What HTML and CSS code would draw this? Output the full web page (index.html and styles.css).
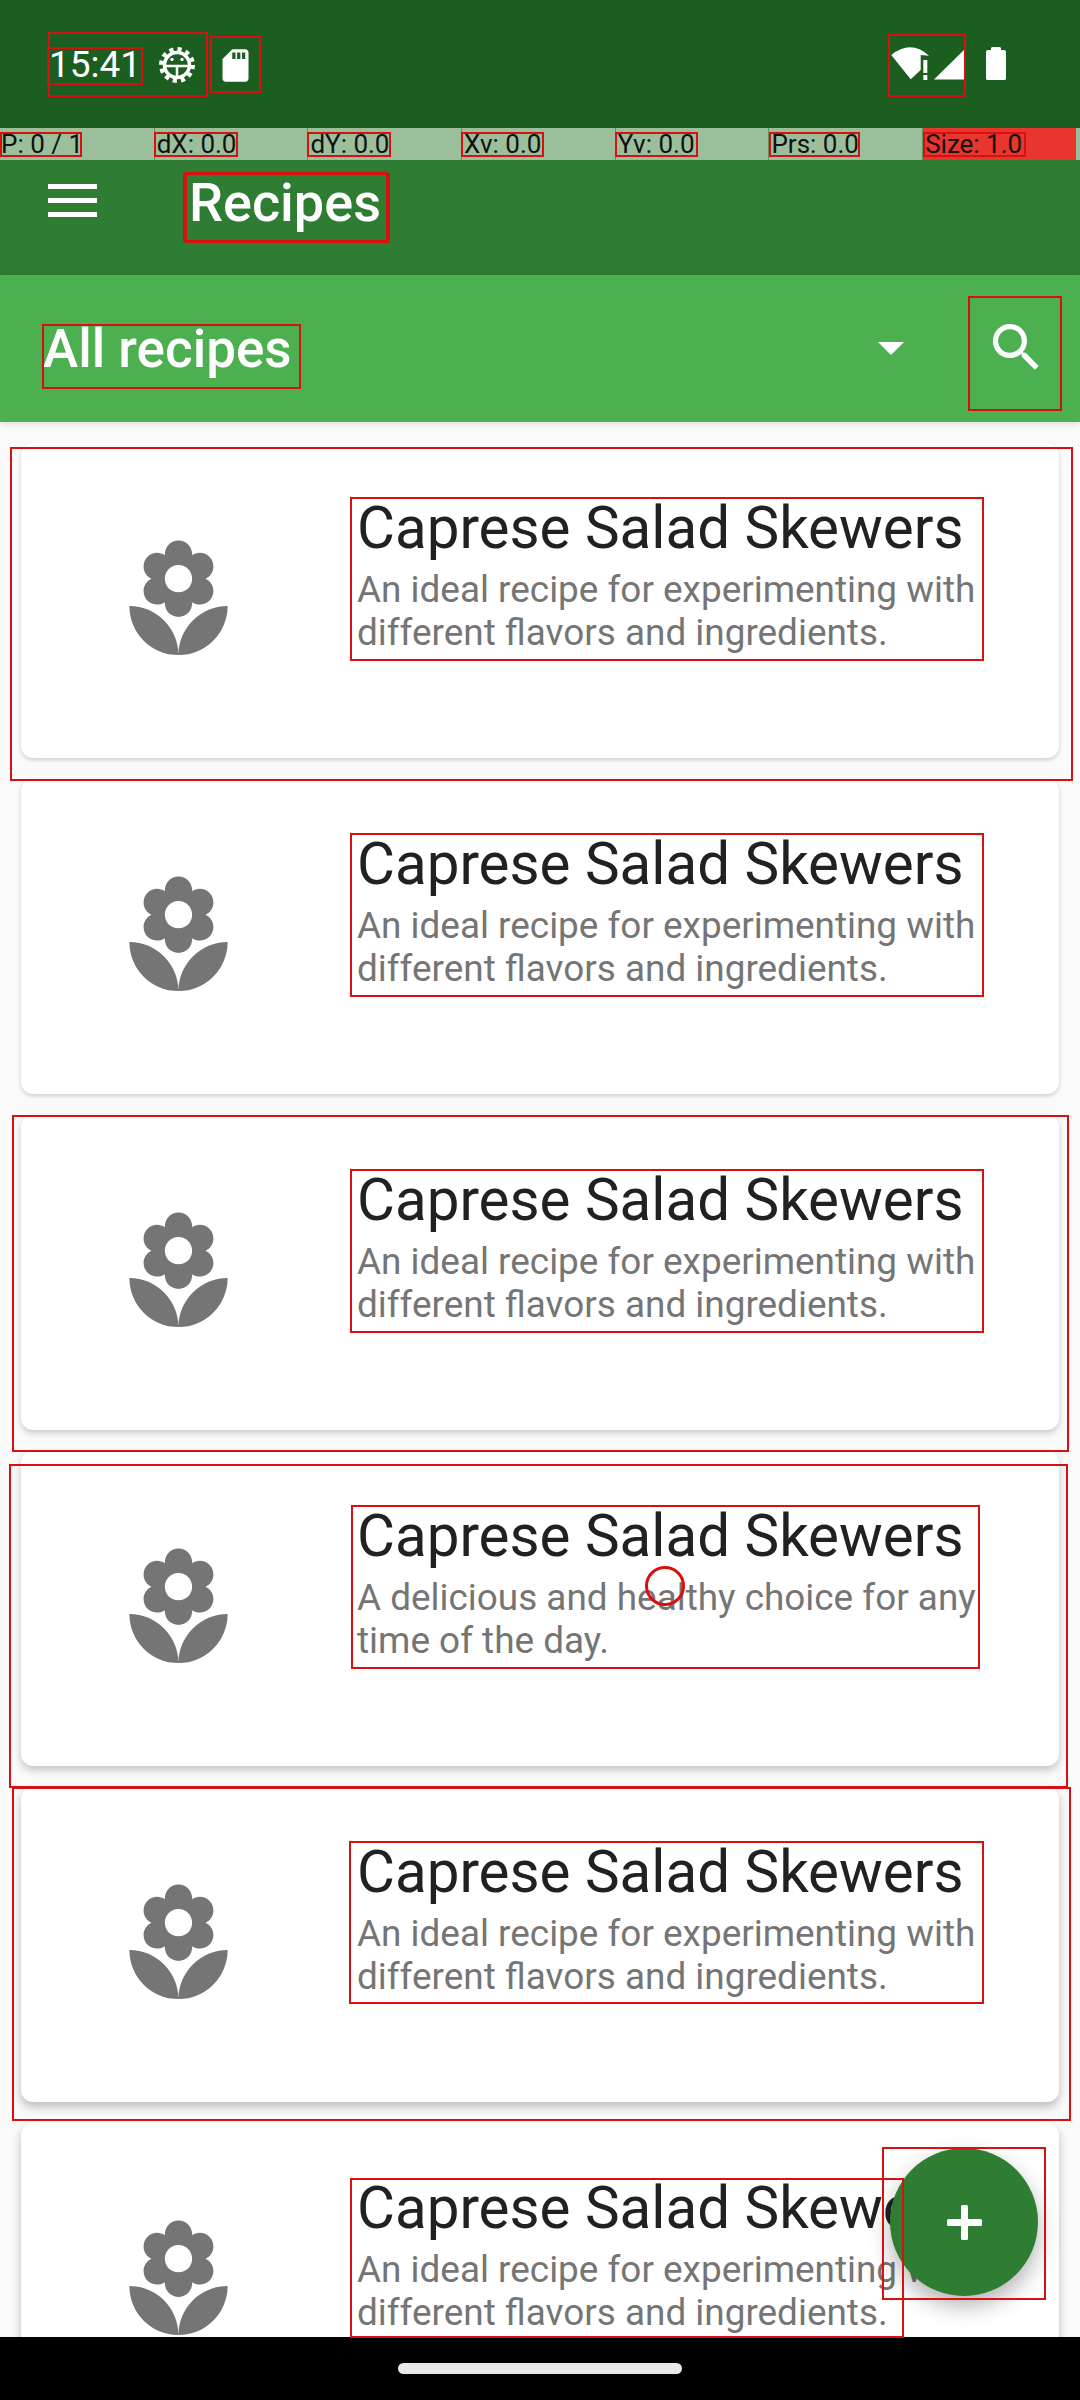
FILE: index.html
```html
<!DOCTYPE html>
<html>
<head>
	<meta charset="UTF-8">
	<title>Recipes</title>
	<link rel="stylesheet" href="styles.css">
</head>
<body>
<div class="screen">
	<div class="status-bar">
		<span class="clock">15:41</span>
		<svg class="gear" viewBox="0 0 36 36">
			<circle class="gear-teeth" cx="18" cy="18" r="15.5"/>
			<circle class="gear-ring" cx="18" cy="18" r="12.5"/>
			<path class="gear-lines" d="M6 19h24M18 19v11"/>
			<circle class="gear-eye" cx="13" cy="12.5" r="1.7"/>
			<circle class="gear-eye" cx="23" cy="12.5" r="1.7"/>
		</svg>
		<svg class="sd" viewBox="0 0 24 24"><path d="M18 2h-8L4.02 8 4 20c0 1.1.9 2 2 2h12c1.1 0 2-.9 2-2V4c0-1.1-.9-2-2-2zm-6 6h-2V4h2v4zm3 0h-2V4h2v4zm3 0h-2V4h2v4z"/></svg>
		<div class="status-right">
			<svg class="signal" viewBox="0 0 80 36">
				<path d="M4.300 11Q23.700-4.750 42 11.700L33.700 11V26L23.700 35.300Z"/>
				<path d="M36.300 16h4v13h-4zM36.300 31h4v5h-4z"/>
				<path d="M47 35.500L79 4V35.500Z"/>
			</svg>
			<svg class="battery" viewBox="0 0 20 33"><path d="M5 3V1.500C5 .7 5.700 0 6.500 0h7C14.300 0 15 .7 15 1.500V3h3c1.100 0 2 .9 2 2v26.500c0 .8-.7 1.500-1.500 1.500h-17C.7 33 0 32.300 0 31.500V5c0-1.100.9-2 2-2z"/></svg>
		</div>
	</div>

	<div class="debug-bar">
		<div class="debug-cell">P: 0 / 1</div>
		<div class="debug-cell">dX: 0.0</div>
		<div class="debug-cell">dY: 0.0</div>
		<div class="debug-cell">Xv: 0.0</div>
		<div class="debug-cell">Yv: 0.0</div>
		<div class="debug-cell">Prs: 0.0</div>
		<div class="debug-cell debug-red">Size: 1.0</div>
	</div>

	<div class="toolbar">
		<div class="menu-icon"><span></span><span></span><span></span></div>
		<div class="toolbar-title">Recipes</div>
	</div>

	<div class="filter-bar">
		<div class="filter-label">All recipes</div>
		<div class="caret"></div>
		<svg class="search" viewBox="0 0 24 24"><path d="M15.500 14h-.79l-.28-.27C15.410 12.590 16 11.110 16 9.500 16 5.910 13.090 3 9.500 3S3 5.910 3 9.500 5.910 16 9.500 16c1.610 0 3.090-.59 4.230-1.570l.27.28v.79l5 4.990L20.490 19l-4.990-5zm-6 0C7.010 14 5 11.990 5 9.500S7.010 5 9.500 5 14 7.010 14 9.500 11.990 14 9.500 14z"/></svg>
	</div>

	<div class="list">
		<div class="card">
			<svg class="flower" viewBox="0 0 24 24"><path d="M12 22c4.970 0 9-4.030 9-9-4.970 0-9 4.030-9 9zM5.600 10.250c0 1.380 1.120 2.500 2.500 2.500.53 0 1.010-.16 1.420-.44l-.02.19c0 1.380 1.120 2.500 2.500 2.500s2.500-1.120 2.500-2.500l-.02-.19c.4.28.89.44 1.420.44 1.380 0 2.500-1.120 2.500-2.500 0-1-.59-1.850-1.430-2.250.84-.4 1.430-1.250 1.430-2.250 0-1.380-1.120-2.500-2.500-2.500-.53 0-1.010.16-1.420.44l.02-.19C14.500 2.120 13.380 1 12 1S9.500 2.120 9.500 3.500l.02.19c-.4-.28-.89-.44-1.420-.44-1.380 0-2.500 1.120-2.500 2.500 0 1 .59 1.850 1.430 2.250-.84.4-1.430 1.250-1.430 2.250zM12 5.500c1.380 0 2.500 1.120 2.500 2.500s-1.120 2.500-2.500 2.500S9.500 9.380 9.500 8s1.120-2.500 2.500-2.500zM3 13c0 4.970 4.030 9 9 9 0-4.970-4.030-9-9-9z"/></svg>
			<div class="card-text">
				<div class="card-title">Caprese Salad Skewers</div>
				<div class="card-desc">An ideal recipe for experimenting with different flavors and ingredients.</div>
			</div>
		</div>
		<div class="card">
			<svg class="flower" viewBox="0 0 24 24"><path d="M12 22c4.970 0 9-4.030 9-9-4.970 0-9 4.030-9 9zM5.600 10.250c0 1.380 1.120 2.500 2.500 2.500.53 0 1.010-.16 1.420-.44l-.02.19c0 1.380 1.120 2.500 2.500 2.500s2.500-1.120 2.500-2.500l-.02-.19c.4.28.89.44 1.420.44 1.380 0 2.500-1.120 2.500-2.500 0-1-.59-1.850-1.430-2.250.84-.4 1.430-1.250 1.430-2.250 0-1.380-1.120-2.500-2.500-2.500-.53 0-1.010.16-1.420.44l.02-.19C14.500 2.120 13.380 1 12 1S9.500 2.120 9.500 3.500l.02.19c-.4-.28-.89-.44-1.420-.44-1.380 0-2.500 1.120-2.500 2.500 0 1 .59 1.850 1.430 2.250-.84.4-1.430 1.250-1.430 2.250zM12 5.500c1.380 0 2.500 1.120 2.500 2.500s-1.120 2.500-2.500 2.500S9.500 9.380 9.500 8s1.120-2.500 2.500-2.500zM3 13c0 4.970 4.030 9 9 9 0-4.970-4.030-9-9-9z"/></svg>
			<div class="card-text">
				<div class="card-title">Caprese Salad Skewers</div>
				<div class="card-desc">An ideal recipe for experimenting with different flavors and ingredients.</div>
			</div>
		</div>
		<div class="card">
			<svg class="flower" viewBox="0 0 24 24"><path d="M12 22c4.970 0 9-4.030 9-9-4.970 0-9 4.030-9 9zM5.600 10.250c0 1.380 1.120 2.500 2.500 2.500.53 0 1.010-.16 1.420-.44l-.02.19c0 1.380 1.120 2.500 2.500 2.500s2.500-1.120 2.500-2.500l-.02-.19c.4.28.89.44 1.420.44 1.380 0 2.500-1.120 2.500-2.500 0-1-.59-1.850-1.430-2.250.84-.4 1.430-1.250 1.430-2.250 0-1.380-1.120-2.500-2.500-2.500-.53 0-1.010.16-1.420.44l.02-.19C14.500 2.120 13.380 1 12 1S9.500 2.120 9.500 3.500l.02.19c-.4-.28-.89-.44-1.420-.44-1.380 0-2.500 1.120-2.500 2.500 0 1 .59 1.850 1.430 2.250-.84.4-1.430 1.250-1.430 2.250zM12 5.500c1.380 0 2.500 1.120 2.500 2.500s-1.120 2.500-2.500 2.500S9.500 9.380 9.500 8s1.120-2.500 2.500-2.500zM3 13c0 4.970 4.030 9 9 9 0-4.970-4.030-9-9-9z"/></svg>
			<div class="card-text">
				<div class="card-title">Caprese Salad Skewers</div>
				<div class="card-desc">An ideal recipe for experimenting with different flavors and ingredients.</div>
			</div>
		</div>
		<div class="card">
			<svg class="flower" viewBox="0 0 24 24"><path d="M12 22c4.970 0 9-4.030 9-9-4.970 0-9 4.030-9 9zM5.600 10.250c0 1.380 1.120 2.500 2.500 2.500.53 0 1.010-.16 1.420-.44l-.02.19c0 1.380 1.120 2.500 2.500 2.500s2.500-1.120 2.500-2.500l-.02-.19c.4.28.89.44 1.420.44 1.380 0 2.500-1.120 2.500-2.500 0-1-.59-1.850-1.430-2.250.84-.4 1.430-1.250 1.430-2.250 0-1.380-1.120-2.500-2.500-2.500-.53 0-1.010.16-1.420.44l.02-.19C14.500 2.120 13.380 1 12 1S9.500 2.120 9.500 3.500l.02.19c-.4-.28-.89-.44-1.420-.44-1.380 0-2.500 1.120-2.500 2.500 0 1 .59 1.850 1.430 2.250-.84.4-1.430 1.250-1.430 2.250zM12 5.500c1.380 0 2.500 1.120 2.500 2.500s-1.120 2.500-2.500 2.500S9.500 9.380 9.500 8s1.120-2.500 2.500-2.500zM3 13c0 4.970 4.030 9 9 9 0-4.970-4.030-9-9-9z"/></svg>
			<div class="card-text">
				<div class="card-title">Caprese Salad Skewers</div>
				<div class="card-desc">A delicious and healthy choice for any time of the day.</div>
			</div>
		</div>
		<div class="card">
			<svg class="flower" viewBox="0 0 24 24"><path d="M12 22c4.970 0 9-4.030 9-9-4.970 0-9 4.030-9 9zM5.600 10.250c0 1.380 1.120 2.500 2.500 2.500.53 0 1.010-.16 1.420-.44l-.02.19c0 1.380 1.120 2.500 2.500 2.500s2.500-1.120 2.500-2.500l-.02-.19c.4.28.89.44 1.420.44 1.380 0 2.500-1.120 2.500-2.500 0-1-.59-1.850-1.430-2.250.84-.4 1.430-1.250 1.430-2.250 0-1.380-1.120-2.500-2.500-2.500-.53 0-1.010.16-1.420.44l.02-.19C14.500 2.120 13.380 1 12 1S9.500 2.120 9.500 3.500l.02.19c-.4-.28-.89-.44-1.420-.44-1.380 0-2.500 1.120-2.500 2.500 0 1 .59 1.850 1.430 2.250-.84.4-1.430 1.250-1.430 2.250zM12 5.500c1.380 0 2.500 1.120 2.500 2.500s-1.120 2.500-2.500 2.500S9.500 9.380 9.500 8s1.120-2.500 2.500-2.500zM3 13c0 4.970 4.030 9 9 9 0-4.970-4.030-9-9-9z"/></svg>
			<div class="card-text">
				<div class="card-title">Caprese Salad Skewers</div>
				<div class="card-desc">An ideal recipe for experimenting with different flavors and ingredients.</div>
			</div>
		</div>
		<div class="card">
			<svg class="flower" viewBox="0 0 24 24"><path d="M12 22c4.970 0 9-4.030 9-9-4.970 0-9 4.030-9 9zM5.600 10.250c0 1.380 1.120 2.500 2.500 2.500.53 0 1.010-.16 1.420-.44l-.02.19c0 1.380 1.120 2.500 2.500 2.500s2.500-1.120 2.500-2.500l-.02-.19c.4.28.89.44 1.420.44 1.380 0 2.500-1.120 2.500-2.500 0-1-.59-1.850-1.430-2.250.84-.4 1.430-1.250 1.430-2.250 0-1.380-1.120-2.500-2.500-2.500-.53 0-1.010.16-1.420.44l.02-.19C14.500 2.120 13.380 1 12 1S9.500 2.120 9.500 3.500l.02.19c-.4-.28-.89-.44-1.420-.44-1.380 0-2.500 1.120-2.500 2.500 0 1 .59 1.850 1.430 2.250-.84.4-1.430 1.250-1.430 2.250zM12 5.500c1.380 0 2.500 1.120 2.500 2.500s-1.120 2.500-2.500 2.500S9.500 9.380 9.500 8s1.120-2.500 2.500-2.500zM3 13c0 4.970 4.030 9 9 9 0-4.970-4.030-9-9-9z"/></svg>
			<div class="card-text">
				<div class="card-title">Caprese Salad Skewers</div>
				<div class="card-desc">An ideal recipe for experimenting with different flavors and ingredients.</div>
			</div>
		</div>
	</div>

	<div class="nav-bar"><div class="nav-pill"></div></div>

	<div class="fab">
		<svg class="fab-plus" viewBox="0 0 35 35">
			<rect x="14" y="0" width="7" height="35" rx="1.500"/>
			<rect x="0" y="14" width="35" height="7" rx="1.500"/>
		</svg>
	</div>

	<!-- red outlines drawn over the screenshot -->
	<div class="mark m-group"></div>
	<div class="mark m-clock"></div>
	<div class="mark m-sd"></div>
	<div class="mark m-wifi"></div>
	<div class="mark m-p"></div>
	<div class="mark m-dx"></div>
	<div class="mark m-dy"></div>
	<div class="mark m-xv"></div>
	<div class="mark m-yv"></div>
	<div class="mark m-prs"></div>
	<div class="mark m-size"></div>
	<div class="mark m-title"></div>
	<div class="mark m-title2"></div>
	<div class="mark m-filter"></div>
	<div class="mark m-search"></div>
	<div class="mark m-card1"></div>
	<div class="mark m-text1"></div>
	<div class="mark m-text2"></div>
	<div class="mark m-card3"></div>
	<div class="mark m-text3"></div>
	<div class="mark m-card4"></div>
	<div class="mark m-text4"></div>
	<div class="mark m-card5"></div>
	<div class="mark m-text5"></div>
	<div class="mark m-text6"></div>
	<div class="mark m-fab"></div>
	<div class="mark m-touch"></div>
</div>
</body>
</html>
```
FILE: styles.css
```css
* {
	box-sizing: border-box;
}
body {
	margin: 0;
	font-family: Roboto, "Liberation Sans", sans-serif;
}
.screen {
	position: relative;
	display: flex;
	flex-direction: column;
	width: 1080px;
	height: 2400px;
	overflow: hidden;
	background: #fafafa;
}

/* status bar */
.status-bar {
	display: flex;
	align-items: flex-start;
	height: 128px;
	flex-shrink: 0;
	padding-left: 49px;
	background: #1b5e20;
	color: #fff;
}
.clock {
	width: 110px;
	margin-top: 44px;
	font-size: 37px;
	line-height: 41px;
}
.gear {
	width: 36px;
	height: 36px;
	margin-top: 47px;
}
.gear-teeth {
	fill: none;
	stroke: #fff;
	stroke-width: 5;
	stroke-dasharray: 4.06 4.06;
}
.gear-ring {
	fill: none;
	stroke: #fff;
	stroke-width: 3.500;
}
.gear-lines {
	fill: none;
	stroke: #fff;
	stroke-width: 2.500;
}
.gear-eye {
	fill: #fff;
}
.sd {
	width: 39px;
	height: 39px;
	margin: 46px 0 0 21px;
	fill: #fff;
}
.status-right {
	display: flex;
	margin-left: auto;
	padding: 47px 74px 0 0;
}
.signal {
	width: 80px;
	height: 36px;
	fill: #fff;
	margin-top: -3px;
}
.battery {
	width: 20px;
	height: 33px;
	margin-left: 19px;
	fill: #fff;
}

/* pointer debug row */
.debug-bar {
	display: grid;
	grid-template-columns: repeat(7, 153.700px);
	height: 32px;
	flex-shrink: 0;
	background: #9bbf9b;
}
.debug-cell {
	padding-left: 2px;
	border-left: 1px solid #5c9460;
	font-size: 26px;
	line-height: 32px;
	color: #111;
	white-space: nowrap;
}
.debug-cell:first-child {
	padding-left: 1px;
	border-left: none;
}
.debug-red {
	background: #e8352e;
}

/* toolbar */
.toolbar {
	display: flex;
	height: 115px;
	flex-shrink: 0;
	background: #2e7d32;
	color: #fff;
}
.menu-icon {
	display: flex;
	flex-direction: column;
	gap: 9px;
	width: 49px;
	margin: 24px 0 0 48px;
}
.menu-icon span {
	height: 5px;
	background: #fff;
}
.toolbar-title {
	margin: 12px 0 0 92px;
	font-size: 54px;
	font-weight: 500;
	line-height: 62px;
}

/* filter row */
.filter-bar {
	position: relative;
	display: flex;
	align-items: flex-start;
	height: 147px;
	flex-shrink: 0;
	background: #4caf50;
	color: #fff;
	box-shadow: 0 2px 6px rgba(0, 0, 0, 0.12);
}
.filter-label {
	width: 835px;
	margin: 43px 0 0 43px;
	font-size: 53px;
	font-weight: 500;
	line-height: 62px;
}
.caret {
	width: 0;
	height: 0;
	margin-top: 67px;
	border-left: 13px solid transparent;
	border-right: 13px solid transparent;
	border-top: 13px solid #fff;
}
.search {
	width: 63px;
	height: 63px;
	margin: 41px 0 0 81px;
	fill: #fff;
}

/* recipes */
.list {
	flex: 1;
	min-height: 0;
	overflow: hidden;
	padding: 21px 21px 0;
}
.card {
	display: flex;
	height: 315px;
	margin-bottom: 21px;
	padding: 54px 0 0 92px;
	border-radius: 12px;
	background: #fff;
	box-shadow: 0 2px 4px rgba(0, 0, 0, 0.18);
}
.card:nth-child(3) {
	box-shadow: 0 3px 6px rgba(0, 0, 0, 0.2);
}
.card:nth-child(4) {
	box-shadow: 0 4px 8px rgba(0, 0, 0, 0.22);
}
.card:nth-child(5) {
	box-shadow: 0 5px 10px rgba(0, 0, 0, 0.25);
}
.card:nth-child(6) {
	box-shadow: 0 5px 10px rgba(0, 0, 0, 0.25);
}
.flower {
	width: 131px;
	height: 131px;
	margin-top: 38px;
	fill: #757575;
	flex-shrink: 0;
}
.card-text {
	width: 628px;
	margin-left: 113px;
}
.card-title {
	font-size: 58.300px;
	line-height: 62px;
	color: #212121;
	white-space: nowrap;
}
.card-desc {
	margin-top: 9px;
	font-size: 36.900px;
	line-height: 43px;
	color: #757575;
}

/* bottom */
.nav-bar {
	position: relative;
	display: flex;
	justify-content: center;
	height: 63px;
	flex-shrink: 0;
	padding-top: 26px;
	background: #000;
}
.nav-pill {
	width: 284px;
	height: 11px;
	border-radius: 6px;
	background: #e8e8e8;
}
.fab {
	position: absolute;
	left: 890px;
	top: 2148px;
	display: flex;
	align-items: center;
	justify-content: center;
	width: 148px;
	height: 148px;
	border-radius: 50%;
	background: #2e7d32;
	box-shadow: 0 10px 22px rgba(0, 0, 0, 0.3);
}
.fab-plus {
	width: 35px;
	height: 35px;
	fill: #fff;
}

/* outlines */
.mark {
	position: absolute;
	border: 2px solid #d91010;
}
.m-group { left: 48px; top: 32px; width: 160px; height: 65px; }
.m-clock { left: 47px; top: 47px; width: 96px; height: 38px; }
.m-sd { left: 210px; top: 36px; width: 51px; height: 57px; }
.m-wifi { left: 888px; top: 34px; width: 78px; height: 63px; }
.m-p { left: 0; top: 132px; width: 82px; height: 25px; }
.m-dx { left: 154px; top: 132px; width: 84px; height: 25px; }
.m-dy { left: 307px; top: 132px; width: 84px; height: 25px; }
.m-xv { left: 461px; top: 132px; width: 83px; height: 25px; }
.m-yv { left: 615px; top: 132px; width: 83px; height: 25px; }
.m-prs { left: 769px; top: 132px; width: 91px; height: 25px; }
.m-size { left: 923px; top: 132px; width: 103px; height: 25px; }
.m-title { left: 183px; top: 172px; width: 205px; height: 70px; }
.m-title2 { left: 185px; top: 173px; width: 205px; height: 70px; }
.m-filter { left: 42px; top: 324px; width: 259px; height: 65px; }
.m-search { left: 968px; top: 296px; width: 94px; height: 115px; }
.m-card1 { left: 10px; top: 447px; width: 1063px; height: 334px; }
.m-text1 { left: 350px; top: 497px; width: 634px; height: 164px; }
.m-text2 { left: 350px; top: 833px; width: 634px; height: 164px; }
.m-card3 { left: 12px; top: 1115px; width: 1057px; height: 337px; }
.m-text3 { left: 350px; top: 1169px; width: 634px; height: 164px; }
.m-card4 { left: 9px; top: 1464px; width: 1059px; height: 324px; }
.m-text4 { left: 351px; top: 1505px; width: 629px; height: 164px; }
.m-card5 { left: 12px; top: 1787px; width: 1059px; height: 334px; }
.m-text5 { left: 349px; top: 1841px; width: 635px; height: 163px; }
.m-text6 { left: 350px; top: 2178px; width: 554px; height: 160px; }
.m-fab { left: 882px; top: 2147px; width: 164px; height: 153px; }
.m-touch { left: 645px; top: 1566px; width: 40px; height: 40px; border-radius: 50%; border-width: 3px; }
```
